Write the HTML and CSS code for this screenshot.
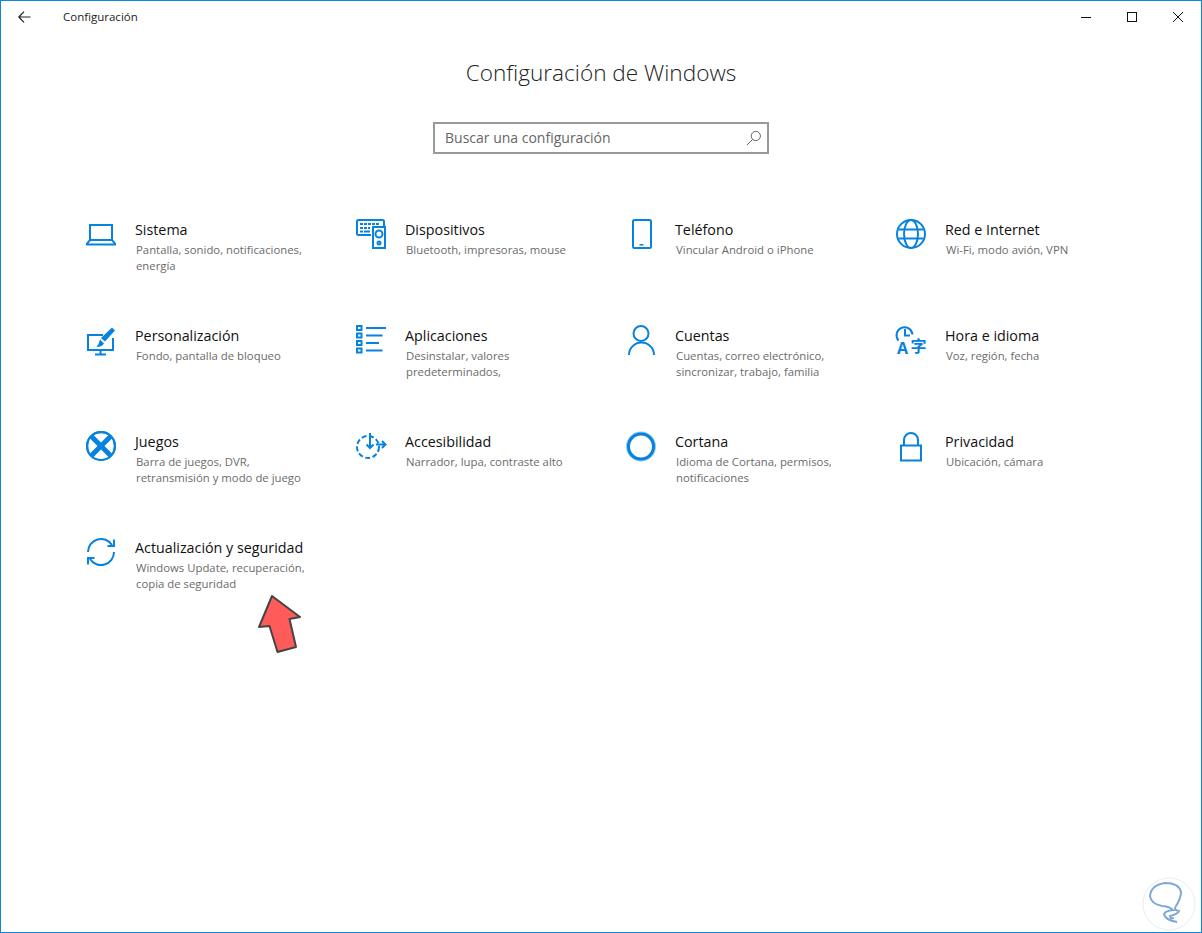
FILE: index.html
```html
<!DOCTYPE html>
<html lang="es">
<head>
<meta charset="utf-8">
<title>Configuración</title>
<link rel="stylesheet" href="styles.css">
</head>
<body>
<div class="window">
  <header class="titlebar">
    <div class="titlebar-left">
      <svg class="back" width="13" height="12" viewBox="0 0 13 12"><path d="M12.500 6H1M6 .7 .8 6 6 11.300"/></svg>
      <span class="app-name">Configuración</span>
    </div>
    <div class="controls">
      <svg width="46" height="10" viewBox="0 0 46 10"><path d="M18 5.500H28"/></svg>
      <svg width="46" height="10" viewBox="0 0 46 10"><rect x="18.500" y=".5" width="9" height="9"/></svg>
      <svg width="46" height="10" viewBox="0 0 46 10"><path d="M18 0 28 10M28 0 18 10"/></svg>
    </div>
  </header>
  <main class="content">
    <h1 class="heading">Configuración de Windows</h1>
    <div class="search">
      <span class="placeholder">Buscar una configuración</span>
      <svg class="search-icon" width="16" height="16" viewBox="0 0 16 16"><circle cx="9.800" cy="6" r="4.600"/><path d="M6.600 9.400 1 15"/></svg>
    </div>
    <div class="grid">
      <div class="item">
        <svg class="icon" viewBox="0 0 30 30"><path d="M4 21V6H26V21"/><path d="M4 21H26L29 24.500V25.500H1V24.500Z"/></svg>
        <div class="text"><div class="name">Sistema</div><div class="desc">Pantalla, sonido, notificaciones,<br>energía</div></div>
      </div>
      <div class="item">
        <svg class="icon" viewBox="0 0 30 30"><path d="M15 16H2.500Q1 16 1 14.500V2.500Q1 1 2.500 1H26.500Q28 1 28 2.500V7"/><path class="dots" d="M4 4h3v2H4zM8 4h3v2H8zM12 4h3v2h-3zM16 4h3v2h-3zM20 4h3v2h-3zM4 8h3v2H4zM8 8h3v2H8zM12 8h2v2h-2zM4 11.500h3v2H4zM8 11.500h6v2H8z"/><rect x="17" y="8" width="12" height="21" class="white"/><circle cx="23" cy="15" r="3.500"/><circle cx="23" cy="24" r="1.500"/></svg>
        <div class="text"><div class="name">Dispositivos</div><div class="desc">Bluetooth, impresoras, mouse</div></div>
      </div>
      <div class="item">
        <svg class="icon" viewBox="0 0 30 30"><rect x="7" y="1" width="18" height="28" rx="1.500"/><path class="dots" d="M13.500 25h4v1.500h-4z"/></svg>
        <div class="text"><div class="name">Teléfono</div><div class="desc">Vincular Android o iPhone</div></div>
      </div>
      <div class="item">
        <svg class="icon" viewBox="0 0 30 30"><circle cx="15" cy="15" r="14"/><ellipse cx="15" cy="15" rx="7" ry="14"/><path d="M2.500 10.500H27.500M2.500 19.500H27.500"/></svg>
        <div class="text"><div class="name">Red e Internet</div><div class="desc">Wi-Fi, modo avión, VPN</div></div>
      </div>

      <div class="item">
        <svg class="icon" viewBox="0 0 30 30"><path d="M17 10H2V25H27V13"/><path d="M14.500 25V29M9 29.500H20"/><path class="dots" d="M26 2.500 29 5.500 19 16.500 15 13Z"/><path class="dots" d="M14 14.500 18 18.500Q16 22 10.500 22 13 19 14 14.500Z"/></svg>
        <div class="text"><div class="name">Personalización</div><div class="desc">Fondo, pantalla de bloqueo</div></div>
      </div>
      <div class="item">
        <svg class="icon" viewBox="0 0 30 30"><rect x="1" y="1" width="4.500" height="4"/><rect x="1" y="8.500" width="4.500" height="4"/><rect x="1" y="16" width="4.500" height="4"/><rect x="1" y="23.500" width="4.500" height="4"/><path d="M10 3H30M10 10.500H26.500M10 18H23M10 25.500H26.500"/></svg>
        <div class="text"><div class="name">Aplicaciones</div><div class="desc">Desinstalar, valores<br>predeterminados,</div></div>
      </div>
      <div class="item">
        <svg class="icon" viewBox="0 0 30 30"><circle cx="15" cy="8.500" r="7.500"/><path d="M3 30A12.500 12.500 0 0 1 28 30"/></svg>
        <div class="text"><div class="name">Cuentas</div><div class="desc">Cuentas, correo electrónico,<br>sincronizar, trabajo, familia</div></div>
      </div>
      <div class="item">
        <svg class="icon" viewBox="0 0 30 30"><path d="M2.500 15.500A8 8 0 1 1 16.500 9.500"/><path d="M9 4V10.500H14"/><text x="1" y="29" class="glyph-a">A</text><text x="14.500" y="27" class="glyph-zi">字</text></svg>
        <div class="text"><div class="name">Hora e idioma</div><div class="desc">Voz, región, fecha</div></div>
      </div>

      <div class="item">
        <svg class="icon" viewBox="0 0 30 30"><circle class="solid" cx="15" cy="15" r="15"/><path class="knock" d="M15 11.500 7.500 4Q15 .5 22.500 4ZM11.500 15 4 7.500Q.5 15 4 22.500ZM18.500 15 26 7.500Q29.500 15 26 22.500ZM15 18.500 23 26.500Q15 30 7 26.500Z"/><circle cx="15" cy="15" r="14"/></svg>
        <div class="text"><div class="name">Juegos</div><div class="desc">Barra de juegos, DVR,<br>retransmisión y modo de juego</div></div>
      </div>
      <div class="item">
        <svg class="icon" viewBox="0 0 30 30"><circle class="dashed" cx="12" cy="16" r="11"/><path d="M14 2V17M10.500 13.500 14 17 17.500 13.500M20 13.500H29M26 10 29.500 13.500 26 17"/></svg>
        <div class="text"><div class="name">Accesibilidad</div><div class="desc">Narrador, lupa, contraste alto</div></div>
      </div>
      <div class="item">
        <svg class="icon" viewBox="0 0 30 30"><circle class="halo" cx="15" cy="15.500" r="14"/><circle class="ring" cx="15" cy="15.500" r="12.500"/></svg>
        <div class="text"><div class="name">Cortana</div><div class="desc">Idioma de Cortana, permisos,<br>notificaciones</div></div>
      </div>
      <div class="item">
        <svg class="icon" viewBox="0 0 30 30"><rect x="5" y="14.500" width="20" height="15"/><path d="M8 14.500V9A7 7 0 0 1 22 9V14.500"/></svg>
        <div class="text"><div class="name">Privacidad</div><div class="desc">Ubicación, cámara</div></div>
      </div>

      <div class="item">
        <svg class="icon" viewBox="0 0 30 30"><path d="M2 15A13 13 0 0 1 26 8"/><path d="M28 2.500V9H21.500"/><path d="M28 15A13 13 0 0 1 4 22"/><path d="M2 27.500V21H8.500"/></svg>
        <div class="text"><div class="name">Actualización y seguridad</div><div class="desc">Windows Update, recuperación,<br>copia de seguridad</div></div>
      </div>
    </div>
  </main>
  <svg class="arrow" width="46" height="62" viewBox="0 0 46 62"><path d="M14 2 42 23 31.500 25 38 53 19.500 58 11.500 32 1 33Z"/></svg>
  <svg class="mark" width="56" height="56" viewBox="0 0 56 56"><circle class="mark-ring" cx="28" cy="28" r="26"/><path class="mark-line" d="M36 46Q24 44 23 38 24 35 32 34 27 30 21 30 10 28 9 20 10 9 24 7 38 7 40 16 40 22 35 30 32 34 38 35 37 38 29 40 29 43 33 42 35 40"/></svg>
</div>
</body>
</html>
```
FILE: styles.css
```css
* { box-sizing: border-box; }
html, body { margin: 0; padding: 0; }
body { background: #fff; font-family: "Open Sans", "Noto Sans", sans-serif; color: #000; }

.window {
  position: relative;
  width: 1202px;
  height: 933px;
  border: 1px solid #0f85dc;
  overflow: hidden;
}

.titlebar {
  display: flex;
  justify-content: space-between;
  align-items: center;
  height: 31px;
}
.titlebar-left { display: flex; align-items: center; padding-left: 17px; }
.back { fill: none; stroke: #222; stroke-width: 1.200; margin-right: 32px; }
.app-name { font-size: 11.500px; color: #222; }
.controls { display: flex; }
.controls svg { display: block; fill: none; stroke: #111; stroke-width: 1; }

.content { display: flex; flex-direction: column; align-items: center; }
.heading {
  margin: 24px 0 0;
  font-size: 22.600px;
  font-weight: 300;
  line-height: 34px;
  color: #222;
}
.search {
  display: flex;
  align-items: center;
  justify-content: space-between;
  width: 336px;
  height: 32px;
  margin-top: 32px;
  padding: 0 5px 0 10px;
  border: 2px solid #999;
}
.placeholder { font-size: 14px; line-height: 18px; padding-bottom: 1px; color: #666; }
.search-icon { fill: none; stroke: #666; stroke-width: 1; }

.grid {
  display: grid;
  grid-template-columns: repeat(4, 270px);
  grid-auto-rows: 106px;
  width: 1080px;
  margin-top: 65px;
  margin-right: 35px;
  align-self: flex-end;
}
.item { display: flex; gap: 19px; }
.icon {
  flex: none;
  width: 30px;
  height: 30px;
  fill: none;
  stroke: #0682e0;
  stroke-width: 2;
  overflow: visible;
}
.icon .dots { fill: #0682e0; stroke: none; }
.icon .white { fill: #fff; }
.icon .solid { fill: #0682e0; stroke: none; }
.icon .knock { fill: #fff; stroke: none; }
.icon .dashed { stroke-dasharray: 5 2.500; }
.icon .halo { stroke: #8cc8f0; stroke-width: 2; }
.icon .ring { stroke-width: 3; }
.icon text { fill: #0682e0; stroke: none; }
.glyph-a { font: 700 16px "Open Sans", sans-serif; }
.glyph-zi { font: 700 16px "Noto Sans CJK SC", sans-serif; }

.text { padding-top: 1px; }
.name { font-size: 14.300px; line-height: 20px; color: #111; }
.desc {
  margin-top: 2px;
  padding-left: 1px;
  font-size: 11.350px;
  line-height: 16px;
  color: #6b6b6b;
  white-space: nowrap;
}

.arrow { position: absolute; left: 257px; top: 593px; }
.arrow path { fill: #ff5b5b; stroke: #444; stroke-width: 2; stroke-linejoin: round; }
.mark { position: absolute; left: 1140px; top: 875px; fill: none; }
.mark-ring { stroke: #e6edf5; stroke-width: 1; }
.mark-line { stroke: #7fa8d6; stroke-width: 2; }
```
